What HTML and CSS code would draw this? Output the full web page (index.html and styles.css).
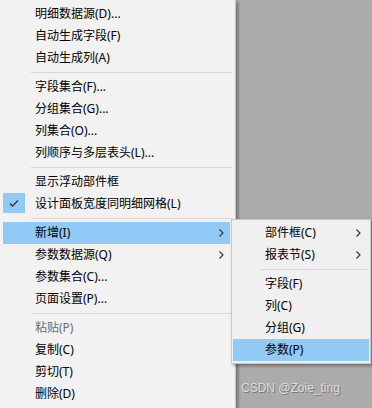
FILE: index.html
```html
<!DOCTYPE html>
<html>
  <head>
    <meta charset="utf-8" />
    <title>设计菜单</title>
    <link rel="stylesheet" href="styles.css">
  </head>
  <body>
    <div class="menu">
      <div class="item"><span class="gutter"></span>明细数据源(D)...</div>
      <div class="item"><span class="gutter"></span>自动生成字段(F)</div>
      <div class="item"><span class="gutter"></span>自动生成列(A)</div>
      <div class="sep"></div>
      <div class="item"><span class="gutter"></span>字段集合(F)...</div>
      <div class="item"><span class="gutter"></span>分组集合(G)...</div>
      <div class="item"><span class="gutter"></span>列集合(O)...</div>
      <div class="item"><span class="gutter"></span>列顺序与多层表头(L)...</div>
      <div class="sep"></div>
      <div class="item"><span class="gutter"></span>显示浮动部件框</div>
      <div class="item">
        <span class="gutter checked">
          <svg width="22" height="20" viewBox="0 0 22 20"><path d="M7 10.5 L9.5 13 L15 7.5" fill="none" stroke="#333" stroke-width="1.3"/></svg>
        </span>设计面板宽度同明细网格(L)
      </div>
      <div class="sep"></div>
      <div class="item active"><span class="gutter"></span>新增(I)
        <svg class="arrow" width="5" height="8" viewBox="0 0 5 8"><path d="M0.5 0.5 L4 4 L0.5 7.5" fill="none" stroke="#333" stroke-width="1.1"/></svg>
      </div>
      <div class="item"><span class="gutter"></span>参数数据源(Q)
        <svg class="arrow" width="5" height="8" viewBox="0 0 5 8"><path d="M0.5 0.5 L4 4 L0.5 7.5" fill="none" stroke="#333" stroke-width="1.1"/></svg>
      </div>
      <div class="item"><span class="gutter"></span>参数集合(C)...</div>
      <div class="item"><span class="gutter"></span>页面设置(P)...</div>
      <div class="sep"></div>
      <div class="item disabled"><span class="gutter"></span>粘贴(P)</div>
      <div class="item"><span class="gutter"></span>复制(C)</div>
      <div class="item"><span class="gutter"></span>剪切(T)</div>
      <div class="item"><span class="gutter"></span>删除(D)</div>
    </div>

    <div class="menu submenu">
      <div class="item"><span class="gutter"></span>部件框(C)
        <svg class="arrow" width="5" height="8" viewBox="0 0 5 8"><path d="M0.5 0.5 L4 4 L0.5 7.5" fill="none" stroke="#333" stroke-width="1.1"/></svg>
      </div>
      <div class="item"><span class="gutter"></span>报表节(S)
        <svg class="arrow" width="5" height="8" viewBox="0 0 5 8"><path d="M0.5 0.5 L4 4 L0.5 7.5" fill="none" stroke="#333" stroke-width="1.1"/></svg>
      </div>
      <div class="sep"></div>
      <div class="item"><span class="gutter"></span>字段(F)</div>
      <div class="item"><span class="gutter"></span>列(C)</div>
      <div class="item"><span class="gutter"></span>分组(G)</div>
      <div class="item active"><span class="gutter"></span>参数(P)</div>
    </div>

    <div class="watermark">CSDN @Zoie_ting</div>
  </body>
</html>
```

FILE: styles.css
```css
body {
  margin: 0;
  background: #ababab;
  font-family: "Noto Sans", "Noto Sans CJK SC", sans-serif;
  font-size: 12px;
  color: #000;
  height: 408px;
  overflow: hidden;
}

.menu {
  width: 236px;
  box-sizing: border-box;
  background: #f2f2f2;
  border-right: 1px solid #c8c8c8;
  padding: 3px 5px 3px 3px;
  box-shadow: 2px 2px 3px rgba(0, 0, 0, 0.35);
}

.item {
  display: flex;
  align-items: center;
  height: 22px;
  line-height: 22px;
  white-space: nowrap;
}

.item.active {
  background: #91c9f7;
}

.item.disabled {
  color: #6d6d6d;
}

.gutter {
  width: 22px;
  height: 20px;
  margin-right: 10px;
  align-self: flex-start;
  flex-shrink: 0;
}

.gutter svg {
  display: block;
}

.gutter.checked {
  background: #91c9f7;
}

.arrow {
  margin-left: auto;
  margin-right: 6px;
}

.sep {
  height: 1px;
  margin: 3px -2px 3px 28px;
  background: #d7d7d7;
}

/* submenu sits on top of the main menu */
.submenu {
  position: absolute;
  left: 231px;
  top: 219px;
  width: 140px;
  border: 1px solid #c8c8c8;
  background: #f0f0f0;
  padding: 2px 1px;
}

.submenu .arrow {
  margin-right: 8px;
}

.submenu .sep {
  margin: 3px 2px 3px 28px;
}

.watermark {
  position: absolute;
  left: 241px;
  top: 380px;
  font-family: "Liberation Sans", sans-serif;
  font-size: 12px;
  line-height: 16px;
  color: #dcdcdc;
  text-shadow: 1px 1px 0 #7a7a7a;
}
```
